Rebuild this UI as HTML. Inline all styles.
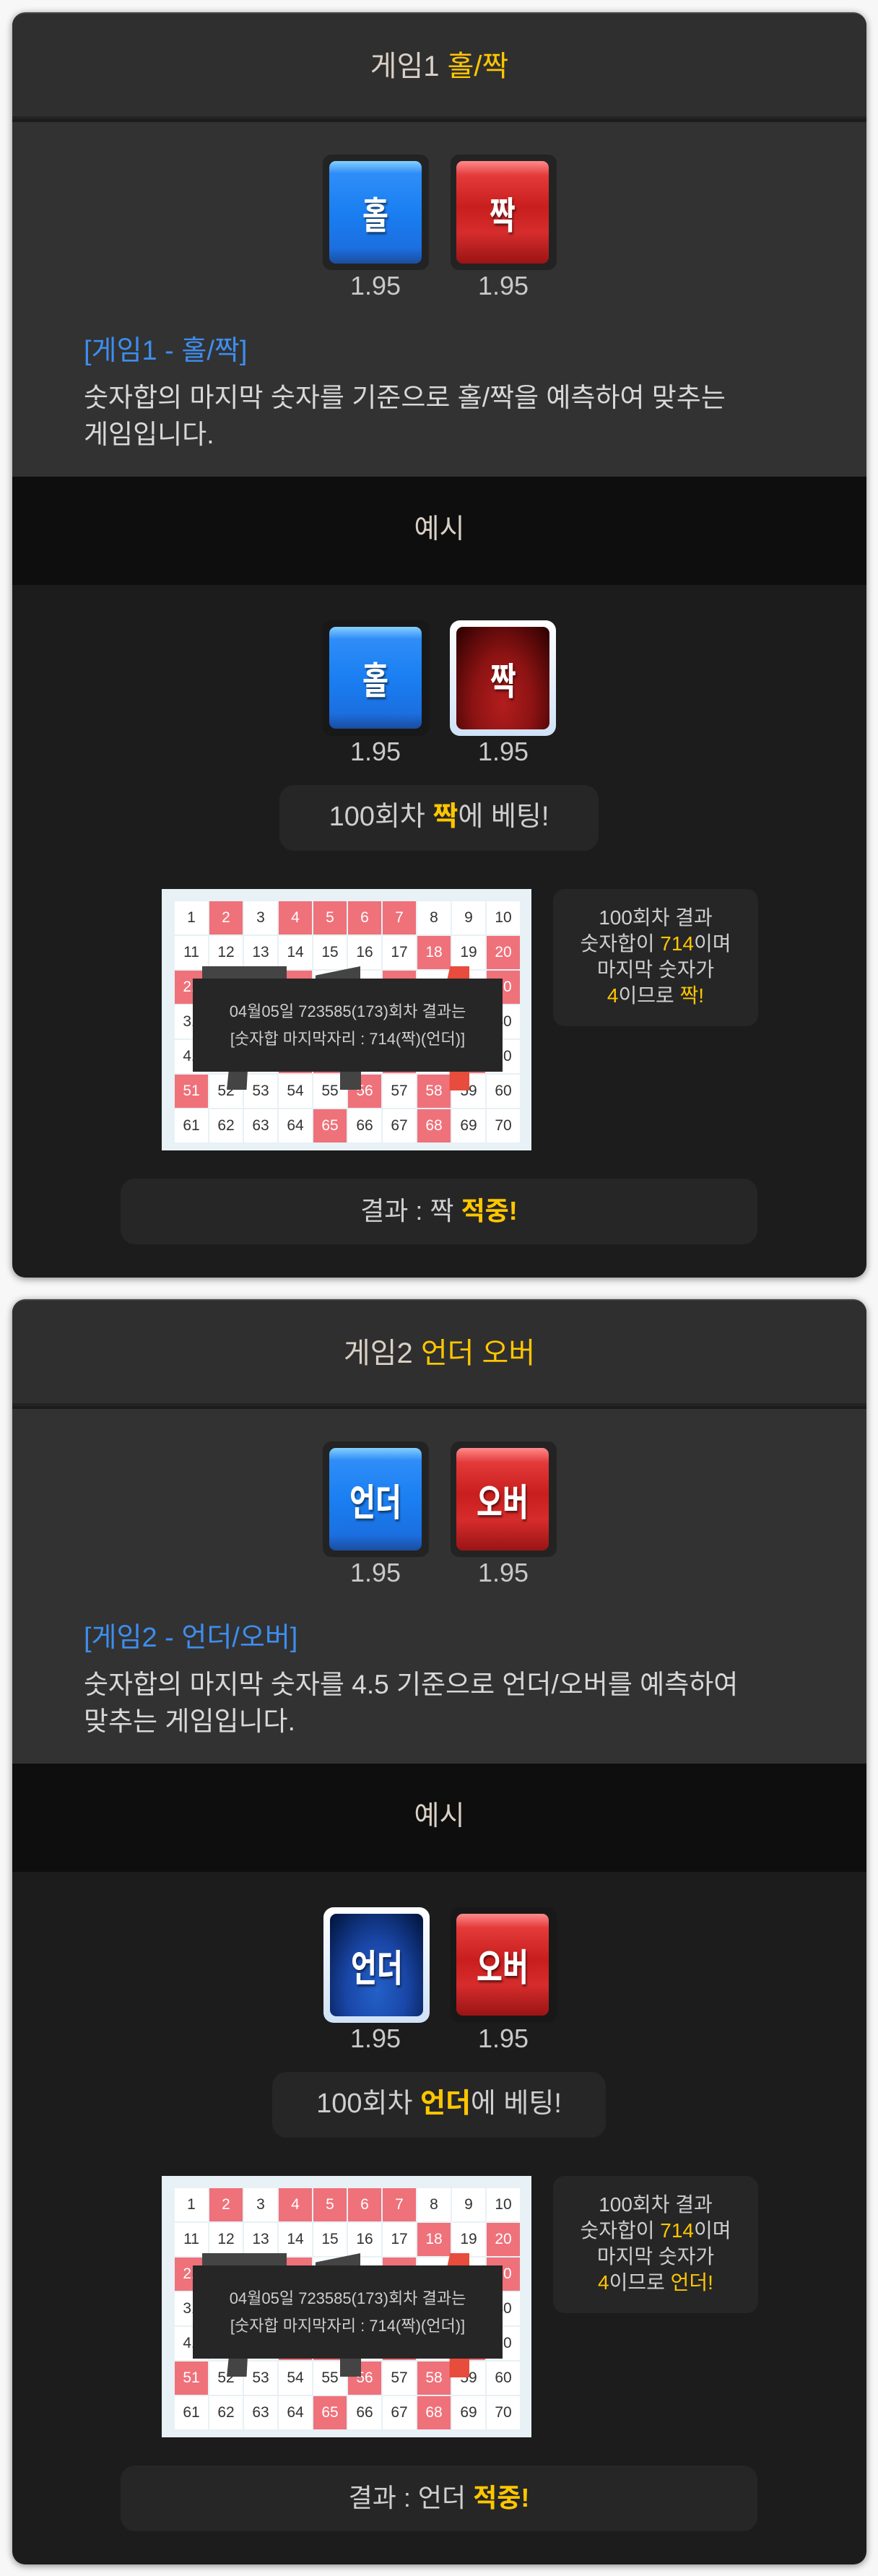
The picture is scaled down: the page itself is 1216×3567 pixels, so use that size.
<!DOCTYPE html>
<html><head><meta charset="utf-8">
<style>
*{margin:0;padding:0;box-sizing:border-box}
body{width:1216px;height:3567px;background:#f7f7f7;font-family:"Liberation Sans","Noto Sans CJK KR",sans-serif;position:relative;overflow:hidden}
.card{position:absolute;left:17px;width:1183px;height:1752px;border-radius:18px;background:#1c1c1c;overflow:hidden;box-shadow:0 2px 10px rgba(0,0,0,.45);border-top:2px solid #444}
.abs{position:absolute}
.hdr{left:0;top:0;width:100%;height:146px;background:#2f2f2f;border-bottom:4px solid #232323;text-align:center;line-height:146px;font-size:40px;color:#d9d0c5}
.y{color:#ffc600}
.b1{left:0;top:150px;width:100%;height:491px;background:#323232}
.band{left:0;top:641px;width:100%;height:150px;background:#0e0e0e;text-align:center;line-height:146px;font-size:38px;color:#d9d0c5}
.frame{background:#232323;border-radius:12px}
.btn{border-radius:9px;color:#fff;font-weight:bold;font-size:52px;display:flex;align-items:center;justify-content:center;text-shadow:2px 3px 3px rgba(0,0,0,.5)}
.btn span{display:inline-block;transform:scaleX(.75)}
.blue{background:linear-gradient(#86d0ff 0%,#2f8df7 12%,#1a7ff2 50%,#1b6fe0 85%,#1b4d9e 100%)}
.red{background:linear-gradient(#ff8a8a 0%,#e43a3a 14%,#c81e1e 45%,#d62c2c 70%,#9a1414 100%)}
.sel{background:linear-gradient(#ffffff,#cfe2f7);border-radius:14px;padding:9px}
.selred{background:radial-gradient(ellipse at 50% 75%,#b31d1d 0%,#8d1313 45%,#2a0000 100%)}
.selblue{background:radial-gradient(ellipse at 50% 75%,#2360c8 0%,#1a47a8 45%,#001238 100%)}
.odds{font-size:36px;color:#c9c9c9;text-align:center;width:140px}
.lbl{left:99px;top:435px;font-size:38px;color:#3d8ef0;white-space:nowrap}
.desc{left:99px;top:506px;font-size:37px;line-height:51px;color:#d8d8d8;white-space:nowrap}
.pill{background:#262626;border-radius:20px;text-align:center;color:#cfcfcf}
.grid{left:207px;top:1212px;width:512px;height:362px;background:#e8f1f5}
.cell{position:absolute;width:46px;height:46px;background:#fff;color:#333;font-size:21px;text-align:center;line-height:46px}
.cell.r{background:#ef717a;color:#fff}
.tip{background:#262626;color:#cfcfcf;font-size:22px;text-align:center;line-height:38px;padding-top:27px;white-space:nowrap;width:429px;height:129px}
.info{left:749px;top:1212px;width:284px;height:190px;background:#262626;border-radius:16px;color:#cfcfcf;font-size:28px;line-height:36px;text-align:center;padding-top:22px}
</style></head><body>

<div class="card" style="top:17px">
  <div class="abs hdr">게임1 <span class="y">홀/짝</span></div>
  <div class="abs b1"></div>
  <div class="abs frame" style="left:430px;top:195px;width:147px;height:160px"></div>
  <div class="abs btn blue" style="left:439px;top:204px;width:128px;height:142px"><span>홀</span></div>
  <div class="abs frame" style="left:607px;top:195px;width:147px;height:160px"></div>
  <div class="abs btn red" style="left:615px;top:204px;width:128px;height:142px"><span>짝</span></div>
  <div class="abs odds" style="left:433px;top:356px">1.95</div>
  <div class="abs odds" style="left:610px;top:356px">1.95</div>
  <div class="abs lbl">[게임1 - 홀/짝]</div>
  <div class="abs desc">숫자합의 마지막 숫자를 기준으로 홀/짝을 예측하여 맞추는<br>게임입니다.</div>
  <div class="abs band">예시</div>

  <div class="abs frame" style="left:430px;top:840px;width:147px;height:160px;background:#181818"></div>
  <div class="abs btn blue" style="left:439px;top:849px;width:128px;height:141px"><span>홀</span></div>
  <div class="abs sel" style="left:606px;top:840px;width:147px;height:160px"><div class="btn selred" style="width:129px;height:142px"><span>짝</span></div></div>
  <div class="abs odds" style="left:433px;top:1001px">1.95</div>
  <div class="abs odds" style="left:610px;top:1001px">1.95</div>
  <div class="abs pill" style="left:370px;top:1068px;width:442px;height:91px;line-height:89px;font-size:38px">100회차 <b class="y">짝</b>에 베팅!</div>

  <div class="abs grid" id="g1"></div>
  <div class="abs info">100회차 결과<br>숫자합이 <span class="y">714</span>이며<br>마지막 숫자가<br><span class="y">4</span>이므로 <span class="y">짝!</span></div>
  <div class="abs pill" style="left:150px;top:1613px;width:882px;height:91px;line-height:89px;font-size:36px">결과 : 짝 <b class="y">적중!</b></div>
</div>

<div class="card" style="top:1799px">
  <div class="abs hdr">게임2 <span class="y">언더 오버</span></div>
  <div class="abs b1"></div>
  <div class="abs frame" style="left:430px;top:195px;width:147px;height:160px"></div>
  <div class="abs btn blue" style="left:439px;top:204px;width:128px;height:142px"><span>언더</span></div>
  <div class="abs frame" style="left:607px;top:195px;width:147px;height:160px"></div>
  <div class="abs btn red" style="left:615px;top:204px;width:128px;height:142px"><span>오버</span></div>
  <div class="abs odds" style="left:433px;top:356px">1.95</div>
  <div class="abs odds" style="left:610px;top:356px">1.95</div>
  <div class="abs lbl">[게임2 - 언더/오버]</div>
  <div class="abs desc">숫자합의 마지막 숫자를 4.5 기준으로 언더/오버를 예측하여<br>맞추는 게임입니다.</div>
  <div class="abs band">예시</div>

  <div class="abs sel" style="left:431px;top:840px;width:147px;height:160px"><div class="btn selblue" style="width:129px;height:142px"><span>언더</span></div></div>
  <div class="abs frame" style="left:607px;top:840px;width:147px;height:160px;background:#181818"></div>
  <div class="abs btn red" style="left:615px;top:849px;width:128px;height:141px"><span>오버</span></div>
  <div class="abs odds" style="left:433px;top:1001px">1.95</div>
  <div class="abs odds" style="left:610px;top:1001px">1.95</div>
  <div class="abs pill" style="left:360px;top:1068px;width:462px;height:91px;line-height:89px;font-size:38px">100회차 <b class="y">언더</b>에 베팅!</div>

  <div class="abs grid" id="g2"></div>
  <div class="abs info">100회차 결과<br>숫자합이 <span class="y">714</span>이며<br>마지막 숫자가<br><span class="y">4</span>이므로 <span class="y">언더!</span></div>
  <div class="abs pill" style="left:150px;top:1613px;width:882px;height:91px;line-height:89px;font-size:36px">결과 : 언더 <b class="y">적중!</b></div>
</div>

<script>
var reds=[2,4,5,6,7,18,20,21,24,27,30,33,36,39,44,45,47,49,51,56,58,65,68];
['g1','g2'].forEach(function(id){
  var g=document.getElementById(id),h='';
  for(var i=1;i<=70;i++){
    var c=(i-1)%10,r=Math.floor((i-1)/10);
    h+='<div class="cell'+(reds.indexOf(i)>=0?' r':'')+'" style="left:'+(18+c*48)+'px;top:'+(17+r*48)+'px">'+i+'</div>';
  }
  h+='<div class="abs" style="left:56px;top:107px;width:117px;height:18px;background:#444"></div>';
  h+='<div class="abs" style="left:213px;top:107px;width:62px;height:18px;background:#444;clip-path:polygon(0 70%,100% 0,100% 100%,0 100%)"></div>';
  h+='<div class="abs" style="left:388px;top:107px;width:38px;height:172px;background:#e74c3c;clip-path:polygon(30% 0,100% 0,100% 100%,28% 100%,28% 30%,0 30%)"></div>';
  h+='<div class="abs" style="left:90px;top:250px;width:29px;height:28px;background:#444;clip-path:polygon(10% 0,100% 0,95% 100%,0 100%)"></div>';
  h+='<div class="abs" style="left:247px;top:250px;width:29px;height:28px;background:#444"></div>';
  h+='<div class="abs tip" style="left:43px;top:124px">04월05일 723585(173)회차 결과는<br>[숫자합 마지막자리 : 714(짝)(언더)]</div>';
  g.innerHTML=h;
});
</script>
</body></html>
